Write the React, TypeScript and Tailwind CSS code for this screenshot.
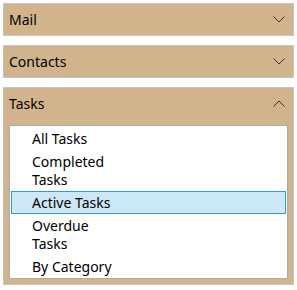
import React from "react";

const Chevron = ({ up }: { up?: boolean }) => (
  <svg width="12" height="7" viewBox="0 0 12 7" className="shrink-0">
    <path
      d={up ? "M0.5 6.5 L6 1 L11.5 6.5" : "M0.5 0.5 L6 6 L11.5 0.5"}
      fill="none"
      stroke="#333"
      strokeWidth="1"
    />
  </svg>
);

const Header = ({ title, up }: { title: string; up?: boolean }) => (
  <div className="flex h-[31px] items-center justify-between pl-[5px] pr-[8px]">
    <span className="text-[14px] text-black">{title}</span>
    <Chevron up={up} />
  </div>
);

const items = [
  { label: ["All Tasks"] },
  { label: ["Completed", "Tasks"] },
  { label: ["Active Tasks"], selected: true },
  { label: ["Overdue", "Tasks"] },
  { label: ["By Category"] },
];

export default function App() {
  return (
    <div
      className="flex w-[297px] flex-col gap-[9px] p-[3px] bg-white"
      style={{ fontFamily: '"Noto Sans", sans-serif' }}
    >
      <div className="border border-[#c4c4c4] bg-[#d2b48c]">
        <Header title="Mail" />
      </div>
      <div className="border border-[#c4c4c4] bg-[#d2b48c]">
        <Header title="Contacts" />
      </div>
      <div className="border border-[#c4c4c4] bg-[#d2b48c] pb-[5px]">
        <Header title="Tasks" up />
        <div className="mx-[5px] mt-[6px] border border-[#abadb3] bg-white px-px pt-[1px]">
          {items.map((it) => (
            <div
              key={it.label.join(" ")}
              className={
                "border py-[1.5px] pl-[20px] text-[14px] leading-[18px] text-black " +
                (it.selected
                  ? "border-[#26a0da] bg-[#cce8f6]"
                  : "border-transparent")
              }
            >
              {it.label.map((l) => (
                <div key={l}>{l}</div>
              ))}
            </div>
          ))}
        </div>
      </div>
    </div>
  );
}
